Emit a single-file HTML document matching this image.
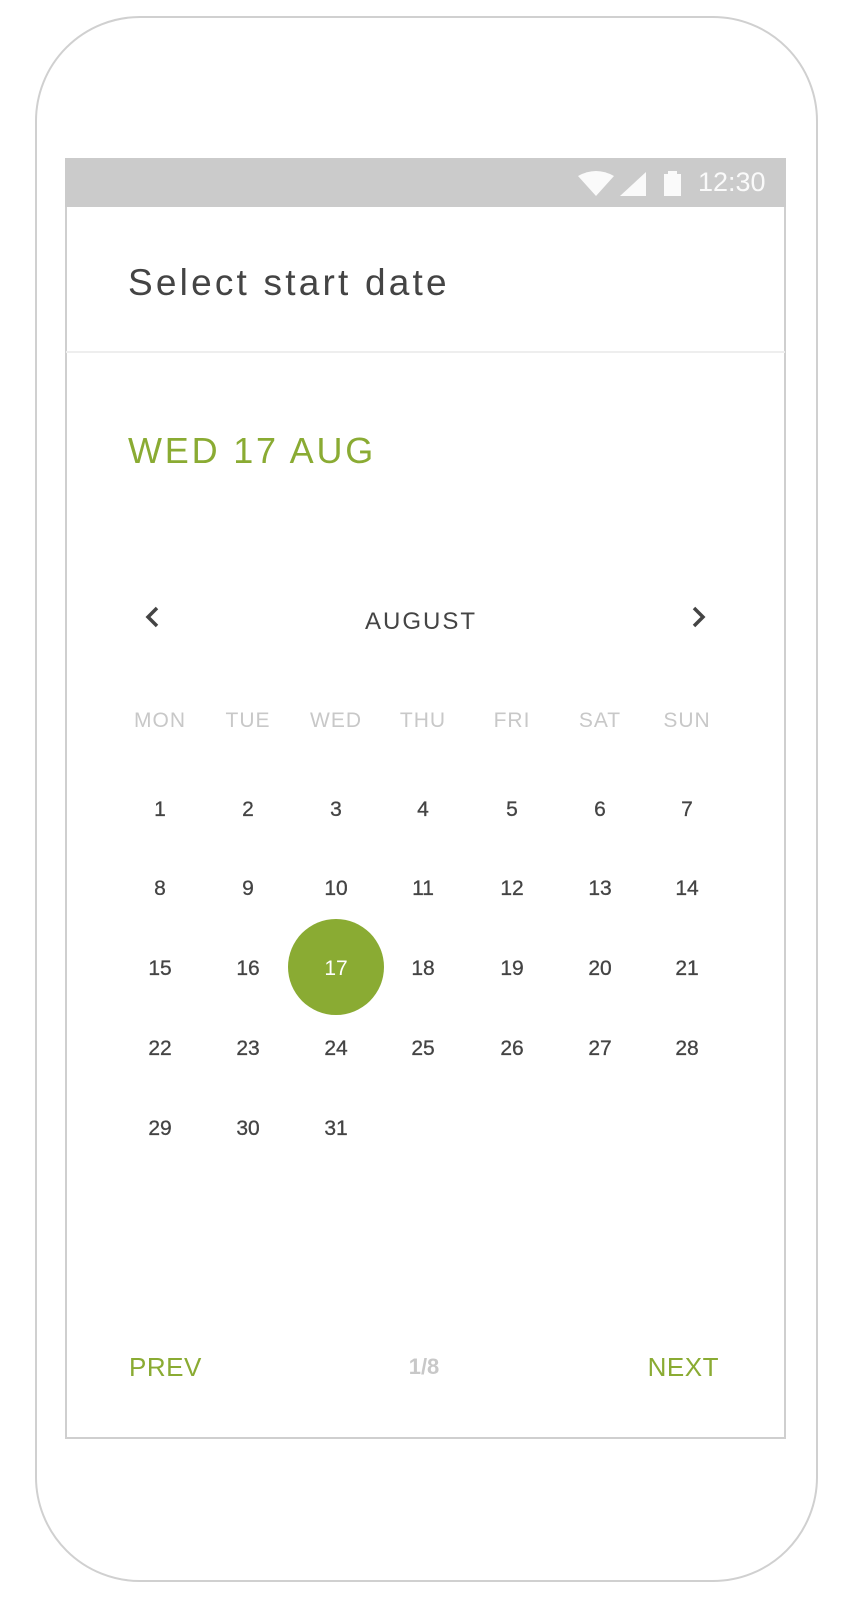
<!DOCTYPE html>
<html><head><style>
*{margin:0;padding:0;box-sizing:border-box}
body{width:852px;height:1600px;background:#fff;position:relative;font-family:"Liberation Sans",sans-serif;overflow:hidden}
.phone{position:absolute;left:35px;top:16px;width:783px;height:1566px;border:2px solid #d0d0d0;border-radius:105px}
.screen{position:absolute;left:65px;top:158px;width:721px;height:1281px;border:2px solid #cfcfcf;border-top:none}
.status{position:absolute;left:65px;top:158px;width:721px;height:49px;background:#cbcbcb}
.t{position:absolute;white-space:nowrap}
.c{transform:translateX(-50%);text-align:center}
.d{font-size:21px;color:#444;-webkit-text-stroke:0.3px #444}
.w{font-size:21px;color:#c8c8c8;letter-spacing:1px}
</style></head><body>
<div class="phone"></div>
<div class="screen"></div>
<div class="status">
<svg style="position:absolute;left:513px;top:12px" width="120" height="26" viewBox="0 0 120 26">
<path d="M0 6 Q18 -4 36 6 L18 26 Z" fill="#fafafa"/>
<path d="M42 26 L68 2 L68 26 Z" fill="#fafafa"/>
<rect x="86" y="4" width="17" height="22" fill="#fafafa"/><rect x="90" y="1" width="9" height="4" fill="#fafafa"/>
</svg>
<div class="t" style="left:633px;top:9px;font-size:27px;color:#fafafa">12:30</div>
</div>
<div class="t" style="left:128px;top:262px;font-size:37px;color:#444;letter-spacing:3.2px">Select start date</div>
<div style="position:absolute;left:66px;top:351px;width:719px;height:2px;background:#eee"></div>
<div class="t" style="left:128px;top:430px;font-size:36px;color:#8aab33;letter-spacing:2.8px">WED 17 AUG</div>
<svg style="position:absolute;left:143px;top:605px" width="20" height="24"><path d="M14 3 L5 12 L14 21" stroke="#444" stroke-width="3.5" fill="none"/></svg>
<svg style="position:absolute;left:688px;top:605px" width="20" height="24"><path d="M6 3 L15 12 L6 21" stroke="#444" stroke-width="3.5" fill="none"/></svg>
<div class="t c" style="left:421px;top:608px;font-size:24px;color:#444;letter-spacing:2px">AUGUST</div>
<div class="t c w" style="left:160px;top:709px">MON</div>
<div class="t c w" style="left:248px;top:709px">TUE</div>
<div class="t c w" style="left:336px;top:709px">WED</div>
<div class="t c w" style="left:423px;top:709px">THU</div>
<div class="t c w" style="left:512px;top:709px">FRI</div>
<div class="t c w" style="left:600px;top:709px">SAT</div>
<div class="t c w" style="left:687px;top:709px">SUN</div>
<div style="position:absolute;left:288px;top:919px;width:96px;height:96px;border-radius:50%;background:#8aab33"></div>
<div id="g"></div>
<script>
var xs=[160,248,336,423,512,600,687],ys=[810,889,969,1049,1129],h='';
for(var i=1;i<=31;i++){var r=Math.floor((i-1)/7),c=(i-1)%7;
h+='<div class="t c d" style="left:'+xs[c]+'px;top:'+(ys[r]-12)+'px;'+(i==17?'color:#fff;-webkit-text-stroke:0':'')+'">'+i+'</div>';}
document.getElementById('g').innerHTML=h;
</script>
<div class="t" style="left:129px;top:1352px;font-size:26px;color:#8aab33;letter-spacing:0.5px">PREV</div>
<div class="t c" style="left:424px;top:1354px;font-size:22px;color:#c8c8c8;font-weight:bold">1/8</div>
<div class="t" style="right:133px;top:1352px;font-size:26px;color:#8aab33;letter-spacing:0.5px">NEXT</div>
</body></html>
